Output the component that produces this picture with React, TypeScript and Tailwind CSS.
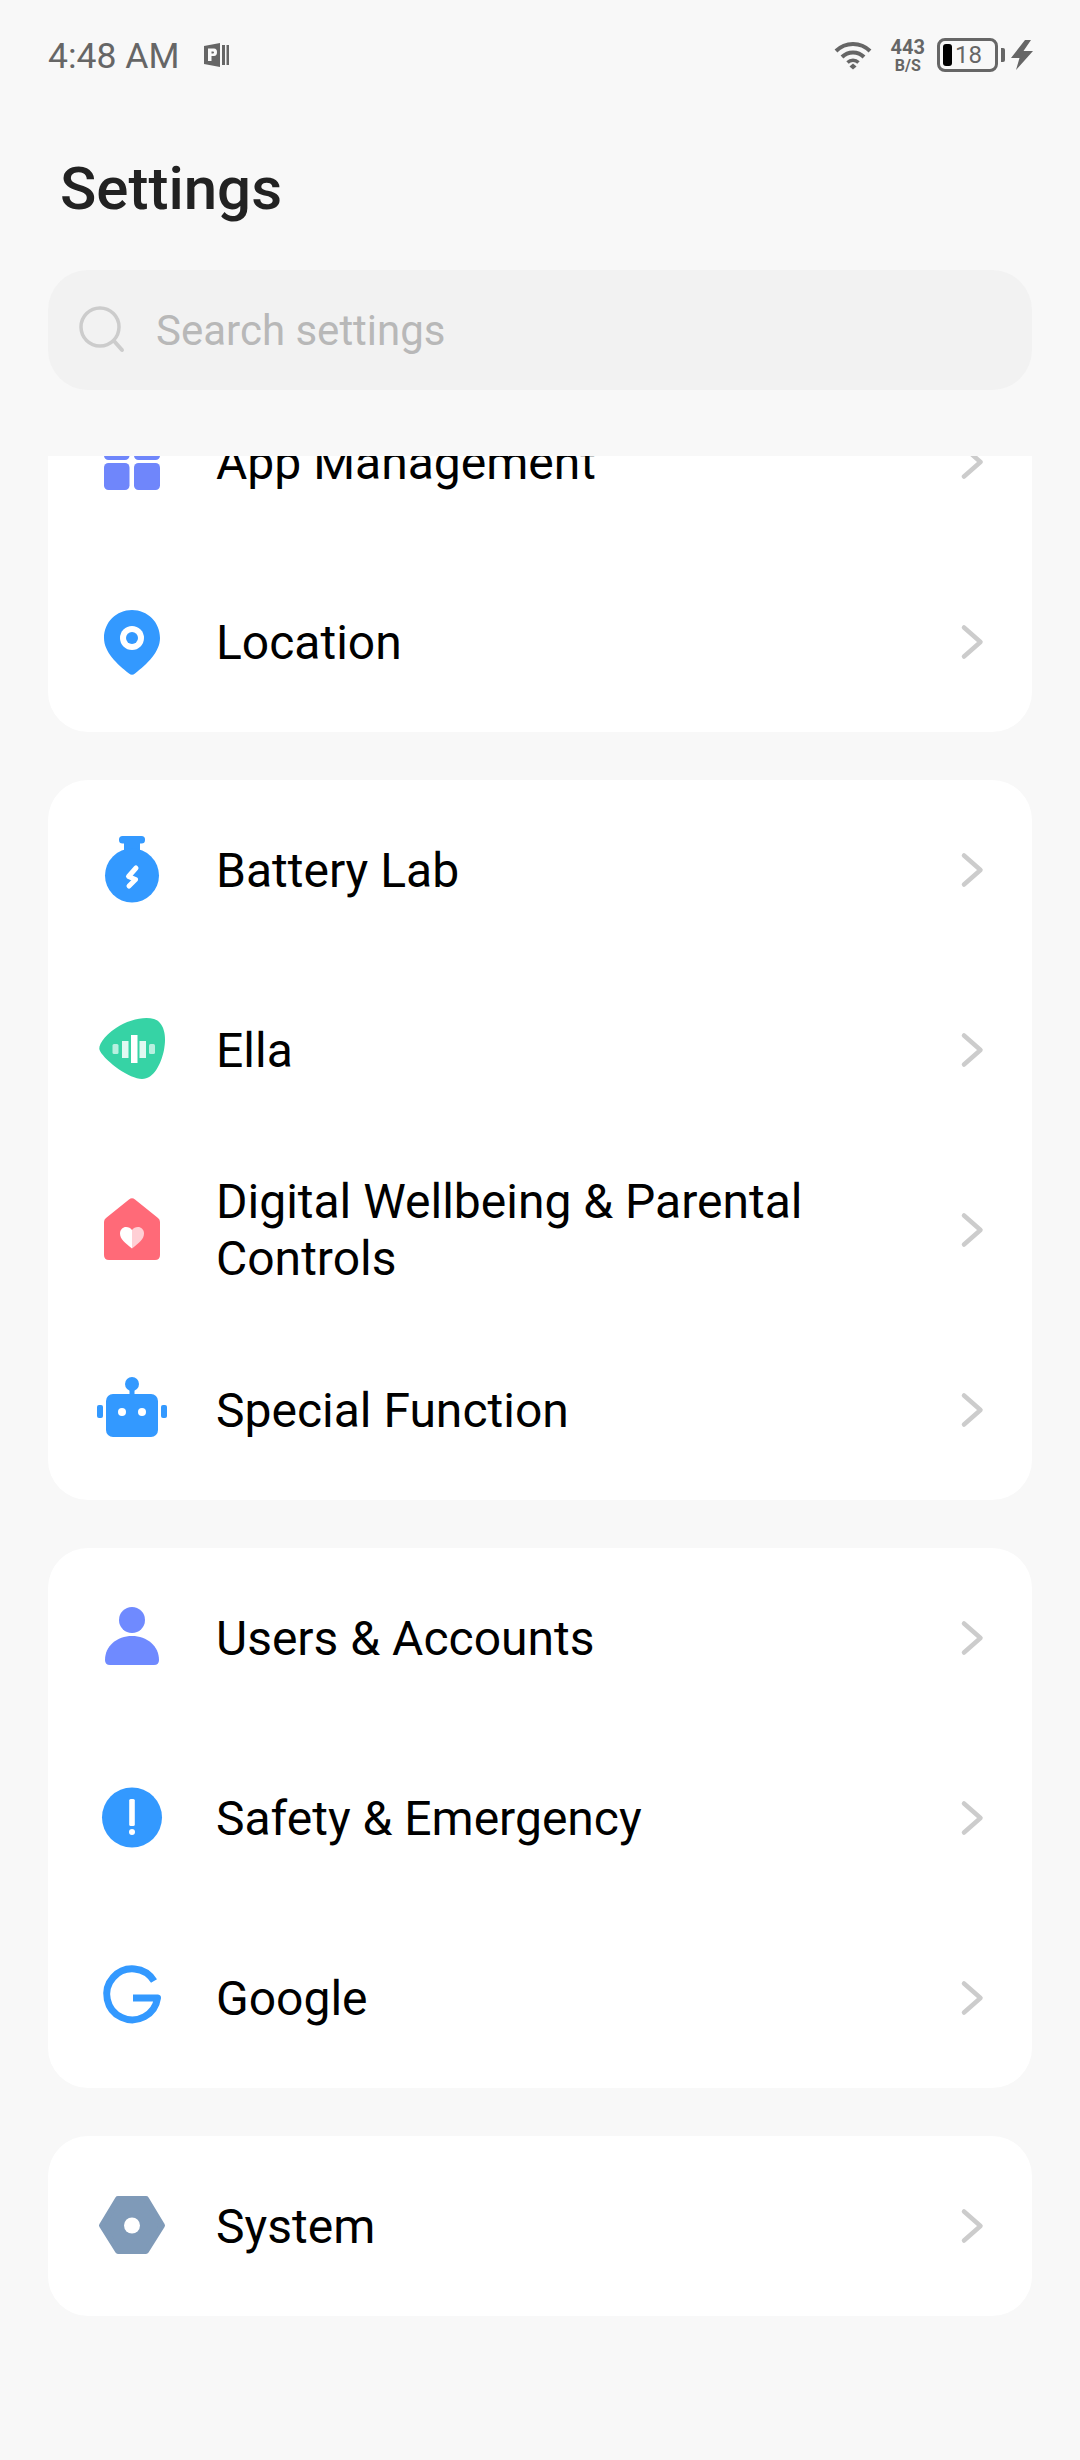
import React from "react";

const BLUE = "#3399ff";

const Icon = ({ children }: { children: React.ReactNode }) => (
  <svg width="80" height="80" viewBox="0 0 80 80" className="shrink-0">
    {children}
  </svg>
);

const AppsIcon = () => (
  <Icon>
    <rect x="12" y="12" width="25.5" height="26" rx="4.5" fill="#6f86fb" />
    <rect x="42" y="12" width="26" height="26" rx="4.5" fill="#6f86fb" />
    <rect x="12" y="41" width="25.5" height="27" rx="4.5" fill="#6f86fb" />
    <rect x="42" y="41" width="26" height="27" rx="4.5" fill="#6f86fb" />
  </Icon>
);

const LocationIcon = () => (
  <Icon>
    <path d="M40 8C24.5 8 12 20 12 36C12 50 25 62 37 71.5Q40 74 43 71.5C55 62 68 50 68 36C68 20 55.5 8 40 8Z" fill={BLUE} />
    <circle cx="40" cy="36" r="12" fill="#fff" />
    <circle cx="40" cy="36" r="6" fill={BLUE} />
  </Icon>
);

const BatteryLabIcon = () => (
  <Icon>
    <rect x="27" y="6" width="26" height="7.5" rx="3.5" fill={BLUE} />
    <rect x="32" y="9" width="16" height="20" fill={BLUE} />
    <circle cx="40" cy="45.5" r="27" fill={BLUE} />
    <path d="M44 38L36.5 46.5L43.5 49.5L37 56" fill="none" stroke="#fff" strokeWidth="5" strokeLinecap="round" strokeLinejoin="round" />
  </Icon>
);

const EllaIcon = () => (
  <Icon>
    <path d="M8 41C5 36 12 26 24 18C36 10 52 6 62 9C72 12 75 26 72 40C69 54 62 69 50 69C38 69 14 52 8 41Z" fill="#36d3a5" />
    <rect x="20.5" y="34" width="6" height="10" rx="1.5" fill="#fff" fillOpacity="0.65" />
    <rect x="30" y="31" width="6.5" height="17" fill="#fff" fillOpacity="0.85" />
    <rect x="39" y="25" width="6.5" height="28" fill="#fff" />
    <rect x="47.5" y="31" width="6.5" height="17" fill="#fff" fillOpacity="0.85" />
    <rect x="57" y="34" width="6" height="10" rx="1.5" fill="#fff" fillOpacity="0.65" />
  </Icon>
);

const WellbeingIcon = () => (
  <Icon>
    <path d="M37 9.5Q40 7 43 9.5L66 28Q68 29.5 68 32V65Q68 70 63 70H17Q12 70 12 65V32Q12 29.5 14 28Z" fill="#ff6a78" />
    <path d="M40 58.5C33 53 28 49 28 43.5C28 39.5 31 37 34 37C36.5 37 38.7 38 40 40Z" fill="#fff" />
    <path d="M40 58.5C47 53 52 49 52 43.5C52 39.5 49 37 46 37C43.5 37 41.3 38 40 40Z" fill="#ffcfd5" />
  </Icon>
);

const RobotIcon = () => (
  <Icon>
    <circle cx="40" cy="14" r="7" fill={BLUE} />
    <rect x="37.5" y="16" width="5" height="10" fill={BLUE} />
    <rect x="14" y="24" width="52" height="43" rx="7" fill={BLUE} />
    <rect x="5" y="35" width="6" height="13" rx="2" fill={BLUE} />
    <rect x="69" y="35" width="6" height="13" rx="2" fill={BLUE} />
    <circle cx="30" cy="42" r="4" fill="#fff" />
    <circle cx="50" cy="42" r="4" fill="#fff" />
  </Icon>
);

const UserIcon = () => (
  <Icon>
    <circle cx="40" cy="22" r="13" fill="#6f8aff" />
    <path d="M13 62C13 48 25 38 40 38C55 38 67 48 67 62Q67 67 62 67H18Q13 67 13 62Z" fill="#6f8aff" />
  </Icon>
);

const SafetyIcon = () => (
  <Icon>
    <circle cx="40" cy="39.5" r="30" fill={BLUE} />
    <rect x="37.2" y="21" width="5.6" height="27" rx="1.5" fill="#fff" />
    <circle cx="40" cy="54" r="3" fill="#fff" />
  </Icon>
);

const GoogleIcon = () => (
  <Icon>
    <path d="M62 23A25.5 25.5 0 1 0 65.5 40H41" fill="none" stroke={BLUE} strokeWidth="7" strokeLinejoin="round" />
  </Icon>
);

const SystemIcon = () => (
  <Icon>
    <polygon points="26,13 54,13 70,39.5 54,65 26,65 10,39.5" fill="#7f9ab8" stroke="#7f9ab8" strokeWidth="6" strokeLinejoin="round" />
    <circle cx="40" cy="39.5" r="8" fill="#fff" />
  </Icon>
);

const Chevron = () => (
  <svg width="24" height="36" viewBox="0 0 24 36" className="shrink-0 ml-auto mr-[48px]">
    <path d="M4 3.5L20.5 18L4 32.5" fill="none" stroke="#cccccc" strokeWidth="4.5" strokeLinecap="round" strokeLinejoin="round" />
  </svg>
);

const Row = ({ icon, label }: { icon: React.ReactNode; label: React.ReactNode }) => (
  <div className="flex items-center h-[180px] pl-[44px]">
    {icon}
    <div className="ml-[44px] w-[640px] text-[48px] leading-[57px] text-black">{label}</div>
    <Chevron />
  </div>
);

const Card = ({ children }: { children: React.ReactNode }) => (
  <div className="mx-[48px] bg-white rounded-[40px]">{children}</div>
);

const StatusBar = () => (
  <div className="flex items-center h-[108px] pt-[2px] pl-[48px] pr-[47px] text-[#666666]">
    <span className="text-[35.5px] leading-[40px] mt-[1px]">4:48 AM</span>
    <svg width="28" height="26" viewBox="0 0 28 26" className="ml-[23px] -mt-[1px]">
      <path d="M2 4L18 1V25L2 22Z" fill="#666" />
      <rect x="20" y="3" width="3" height="20" fill="#666" />
      <rect x="24.5" y="3" width="2.5" height="20" fill="#666" />
      <path d="M6 6.5H12Q15 6.5 15 10Q15 14 12 14H9.5V19H6ZM9.5 9.5V11.5H11Q12 11.5 12 10.5Q12 9.5 11 9.5Z" fill="#fafafa" fillRule="evenodd" />
    </svg>
    <svg width="38" height="30" viewBox="0 0 38 30" className="ml-auto">
      <path d="M2 11A24 24 0 0 1 36 11" fill="none" stroke="#666" strokeWidth="4" />
      <path d="M8 17A15.5 15.5 0 0 1 30 17" fill="none" stroke="#666" strokeWidth="4" />
      <path d="M13.5 22.5A8 8 0 0 1 24.5 22.5" fill="none" stroke="#666" strokeWidth="3.5" />
      <path d="M15.5 26.5L19 23.5L22.5 26.5L19 29.5Z" fill="#666" />
    </svg>
    <div className="ml-[19px] flex flex-col items-center font-bold">
      <span className="text-[20px] leading-[20px]">443</span>
      <span className="text-[16px] leading-[16px] mt-[1px]">B/S</span>
    </div>
    <div className="ml-[12px] flex items-center w-[61px] h-[34px] rounded-[8px] border-[3px] border-[#666666] pl-[3px]">
      <div className="w-[9px] h-[22px] rounded-[3px] bg-black" />
      <span className="ml-[3px] text-[24px] leading-[28px]">18</span>
    </div>
    <div className="ml-[3px] w-[4px] h-[14px] bg-[#666666] rounded-r-[2px]" />
    <svg width="22" height="30" viewBox="0 0 22 30" className="ml-[6px]">
      <path d="M14 0L0 18H8.5L5 30L22 11H12.5L20 0Z" fill="#666" />
    </svg>
  </div>
);

export default function App() {
  return (
    <div className="flex flex-col h-[2460px] w-[1080px] bg-[#f8f8f8] font-['Roboto',sans-serif] overflow-hidden">
      <StatusBar />
      <div className="flex items-center h-[162px] pl-[60px] text-[60px] font-medium text-[#222222]">Settings</div>
      <div className="flex items-center mx-[48px] h-[120px] rounded-[40px] bg-[#f2f2f2]">
        <svg width="50" height="50" viewBox="0 0 50 50" className="ml-[30px]">
          <circle cx="22" cy="22" r="19" fill="none" stroke="#cccccc" strokeWidth="3.5" />
          <path d="M36 36L44 45" fill="none" stroke="#cccccc" strokeWidth="4" strokeLinecap="round" />
        </svg>
        <span className="ml-[28px] text-[42px] text-[#b8b8b8]">Search settings</span>
      </div>
      <div className="mt-[66px] flex-1 overflow-hidden">
        <div className="-mt-[84px] flex flex-col gap-[48px]">
          <Card>
            <Row icon={<AppsIcon />} label="App Management" />
            <Row icon={<LocationIcon />} label="Location" />
          </Card>
          <Card>
            <Row icon={<BatteryLabIcon />} label="Battery Lab" />
            <Row icon={<EllaIcon />} label="Ella" />
            <Row icon={<WellbeingIcon />} label="Digital Wellbeing & Parental Controls" />
            <Row icon={<RobotIcon />} label="Special Function" />
          </Card>
          <Card>
            <Row icon={<UserIcon />} label="Users & Accounts" />
            <Row icon={<SafetyIcon />} label="Safety & Emergency" />
            <Row icon={<GoogleIcon />} label="Google" />
          </Card>
          <Card>
            <Row icon={<SystemIcon />} label="System" />
          </Card>
        </div>
      </div>
    </div>
  );
}
